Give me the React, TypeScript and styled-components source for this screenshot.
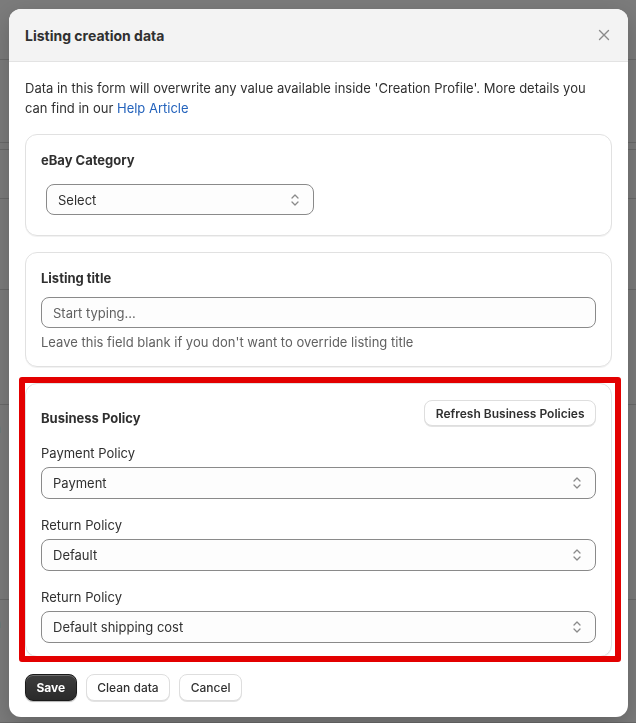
import React from 'react';
import styled, { createGlobalStyle } from 'styled-components';

const GlobalStyle = createGlobalStyle`
  html, body {
    margin: 0;
    padding: 0;
    width: 636px;
    height: 723px;
    overflow: hidden;
    background: #ffffff;
    font-family: Inter, 'Noto Sans', sans-serif;
    color: #303030;
  }
  * { box-sizing: border-box; }
`;

// --- BACKGROUND PAGE (behind the backdrop) ---
const Page = styled.div`
  width: 636px;
  height: 723px;
  display: flex;
  flex-direction: column;
  background: #f6f6f6;
  overflow: hidden;
`;

const PageRow = styled.div<{ $h: number }>`
  height: ${({ $h }) => $h}px;
  flex-shrink: 0;
  display: flex;
  justify-content: space-between;
  align-items: flex-start;
  border-bottom: 1px solid #d2d2d2;
  font-size: 13px;
  line-height: 20px;
  color: #222222;
`;

const EdgeColumn = styled.div<{ $side: 'left' | 'right'; $top: number }>`
  display: flex;
  flex-direction: column;
  gap: 20px;
  padding-top: ${({ $top }) => $top}px;
  white-space: nowrap;
  ${({ $side }) => ($side === 'left' ? 'margin-left: -42px;' : 'margin-right: -52px; text-align: left;')}
`;

const Backdrop = styled.div`
  position: fixed;
  inset: 0;
  background: rgba(0, 0, 0, 0.5);
`;

// --- MODAL ---
const Modal = styled.div`
  position: fixed;
  top: 9px;
  left: 9px;
  width: 619px;
  height: 708px;
  background: #ffffff;
  border-radius: 12px;
  overflow: hidden;
  display: flex;
  flex-direction: column;
  box-shadow: 0 8px 24px rgba(0, 0, 0, 0.2);
`;

const Header = styled.div`
  height: 53px;
  flex-shrink: 0;
  display: flex;
  align-items: center;
  justify-content: space-between;
  padding: 0 16px;
  background: #f3f3f3;
  border-bottom: 1px solid #e3e3e3;
`;

const Title = styled.h2`
  margin: 0;
  font-size: 14px;
  font-weight: 650;
  color: #303030;
`;

const CloseButton = styled.button`
  width: 24px;
  height: 24px;
  margin-right: -4px;
  padding: 0;
  border: none;
  background: transparent;
  display: flex;
  align-items: center;
  justify-content: center;
  color: #8a8a8a;
  cursor: pointer;
`;

const Body = styled.div`
  display: flex;
  flex-direction: column;
  gap: 16px;
  padding: 16px 16px 0;
`;

const Intro = styled.p`
  margin: 0;
  max-width: 572px;
  font-size: 13px;
  line-height: 20px;
  color: #303030;
`;

const HelpLink = styled.a`
  color: #2463bc;
  text-decoration: none;
`;

const Card = styled.section<{ $highlight?: boolean }>`
  position: relative;
  display: flex;
  flex-direction: column;
  padding: 15px 15px 14px;
  border: 1px solid #e1e1e1;
  border-radius: 12px;
  background: #ffffff;
  box-shadow: 0 1px 0 rgba(0, 0, 0, 0.05);

  ${({ $highlight }) =>
    $highlight &&
    `
    padding-bottom: 13px;

    &::after {
      content: '';
      position: absolute;
      top: -7px;
      left: -7px;
      right: -10px;
      bottom: -6px;
      border: 6px solid #e30000;
      border-radius: 3px;
      pointer-events: none;
    }
  `}
`;

const CardTitle = styled.h3`
  margin: 0;
  font-size: 13px;
  line-height: 20px;
  font-weight: 650;
  color: #303030;
`;

const CategoryWrap = styled.div`
  margin-top: 10px;
  padding: 4px 5px 6px;
  width: 278px;
`;

const SelectBox = styled.div<{ $h?: number }>`
  height: ${({ $h }) => $h ?? 32}px;
  display: flex;
  align-items: center;
  justify-content: space-between;
  padding: 0 12px 0 11px;
  border: 1px solid #8a8a8a;
  border-radius: 8px;
  background: #fdfdfd;
  font-size: 13px;
  color: #303030;
`;

const Chevron = styled.svg`
  width: 12px;
  height: 14px;
  color: #8a8a8a;
  flex-shrink: 0;
`;

const TextInput = styled.input`
  margin-top: 9px;
  height: 31px;
  width: 100%;
  padding: 0 11px;
  border: 1px solid #8a8a8a;
  border-radius: 8px;
  background: #fdfdfd;
  font-family: inherit;
  font-size: 13px;
  color: #303030;
  outline: none;

  &::placeholder {
    color: #616161;
  }
`;

const HelpText = styled.div`
  margin-top: 4px;
  font-size: 13px;
  line-height: 20px;
  color: #616161;
`;

const PolicyHeader = styled.div`
  min-height: 29px;
  display: flex;
  align-items: flex-end;
  justify-content: space-between;
`;

const PolicyList = styled.div`
  margin-top: 15px;
  display: flex;
  flex-direction: column;
  gap: 16px;
`;

const Field = styled.div`
  display: flex;
  flex-direction: column;
  gap: 4px;
`;

const FieldLabel = styled.label`
  font-size: 13px;
  line-height: 20px;
  color: #303030;
`;

const Footer = styled.div`
  display: flex;
  gap: 9px;
  padding: 17px 16px 0;
`;

const Button = styled.button<{ $primary?: boolean }>`
  height: 27px;
  padding: 0 10.5px;
  border-radius: 8px;
  font-family: inherit;
  font-size: 12px;
  cursor: pointer;
  white-space: nowrap;
  ${({ $primary }) =>
    $primary
      ? `
    background: linear-gradient(180deg, #3d3d3d 0%, #2a2a2a 100%);
    border: 1px solid #1a1a1a;
    color: #ffffff;
    font-weight: 700;
    box-shadow: inset 0 1px 0 rgba(255,255,255,0.25), 0 1px 1px rgba(0,0,0,0.3);
  `
      : `
    background: #ffffff;
    border: 1px solid #dedede;
    color: #303030;
    font-weight: 550;
    box-shadow: 0 1px 0 #e3e3e3;
  `}
`;

const SmallButton = styled(Button)`
  height: 26px;
  margin-bottom: 2px;
  font-weight: 600;
`;

function SelectChevron() {
  return (
    <Chevron viewBox="0 0 12 14" fill="none" stroke="currentColor" strokeWidth="1.3" strokeLinecap="round" strokeLinejoin="round">
      <path d="M3 5l3-3 3 3" />
      <path d="M3 9l3 3 3-3" />
    </Chevron>
  );
}

function Select({ value, height }: { value: string; height?: number }) {
  return (
    <SelectBox $h={height}>
      <span>{value}</span>
      <SelectChevron />
    </SelectBox>
  );
}

const policies = [
  { label: 'Payment Policy', value: 'Payment' },
  { label: 'Return Policy', value: 'Default' },
  { label: 'Return Policy', value: 'Default shipping cost' },
];

type PageRowData = {
  h: number;
  left?: { top: number; lines: string[] };
  right?: { top: number; lines: string[] };
};

const pageRows: PageRowData[] = [
  { h: 60 },
  { h: 83 },
  { h: 7 },
  { h: 49 },
  { h: 91 },
  { h: 115, right: { top: 82, lines: ['Feed'] } },
  { h: 195, left: { top: 13, lines: ['Design'] }, right: { top: 63, lines: ['Stat', 'Stat', 'Stat'] } },
  { h: 123, left: { top: 13, lines: ['Design'] }, right: { top: 86, lines: ['Feed'] } },
];

export default function App() {
  return (
    <>
      <GlobalStyle />
      <Page>
        {pageRows.map((row, i) => (
          <PageRow key={i} $h={row.h}>
            <EdgeColumn $side="left" $top={row.left?.top ?? 0}>
              {row.left?.lines.map((t, j) => <span key={j}>{t}</span>)}
            </EdgeColumn>
            <EdgeColumn $side="right" $top={row.right?.top ?? 0}>
              {row.right?.lines.map((t, j) => <span key={j}>{t}</span>)}
            </EdgeColumn>
          </PageRow>
        ))}
      </Page>
      <Backdrop />

      <Modal role="dialog" aria-label="Listing creation data">
        <Header>
          <Title>Listing creation data</Title>
          <CloseButton aria-label="Close">
            <svg width="12" height="12" viewBox="0 0 12 12" stroke="currentColor" strokeWidth="1.4" strokeLinecap="round">
              <path d="M1.5 1.5l9 9M10.5 1.5l-9 9" />
            </svg>
          </CloseButton>
        </Header>

        <Body>
          <Intro>
            Data in this form will overwrite any value available inside 'Creation Profile'. More details you can find in our{' '}
            <HelpLink href="#">Help Article</HelpLink>
          </Intro>

          <Card>
            <CardTitle>eBay Category</CardTitle>
            <CategoryWrap>
              <Select value="Select" height={31} />
            </CategoryWrap>
          </Card>

          <Card>
            <CardTitle>Listing title</CardTitle>
            <TextInput placeholder="Start typing..." />
            <HelpText>Leave this field blank if you don't want to override listing title</HelpText>
          </Card>

          <Card $highlight>
            <PolicyHeader>
              <CardTitle>Business Policy</CardTitle>
              <SmallButton>Refresh Business Policies</SmallButton>
            </PolicyHeader>
            <PolicyList>
              {policies.map((p, i) => (
                <Field key={i}>
                  <FieldLabel>{p.label}</FieldLabel>
                  <Select value={p.value} />
                </Field>
              ))}
            </PolicyList>
          </Card>
        </Body>

        <Footer>
          <Button $primary>Save</Button>
          <Button>Clean data</Button>
          <Button>Cancel</Button>
        </Footer>
      </Modal>
    </>
  );
}
